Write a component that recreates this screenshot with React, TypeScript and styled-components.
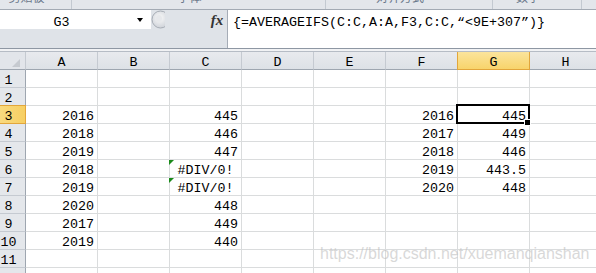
import React from "react";
import styled, { createGlobalStyle } from "styled-components";

const GlobalStyle = createGlobalStyle`
  html, body {
    margin: 0;
    padding: 0;
    background: #fff;
  }
  body {
    overflow: hidden;
  }
`;

const MONO = `"Liberation Mono", "DejaVu Sans Mono", monospace`;

const Frame = styled.div`
  position: relative;
  width: 596px;
  height: 273px;
  overflow: hidden;
  background: #fff;
  font-family: ${MONO};
  font-size: 13.33px;
  color: #000;
`;

// bottom edge of the ribbon, only the group captions peek out
const Ribbon = styled.div`
  display: flex;
  height: 9px;
  overflow: hidden;
  background: #e3e6eb;
  border-bottom: 1px solid #a3aab4;
`;

const RibbonGroup = styled.div<{ $w?: number }>`
  flex: ${p => (p.$w ? `0 0 ${p.$w}px` : "1")};
  box-sizing: border-box;
  height: 9px;
  overflow: hidden;
  padding-right: 18px;
  border-right: 1px solid #c3c9d1;
  text-align: center;
`;

const RibbonLabel = styled.span`
  display: block;
  margin-top: -9px;
  font-family: "Noto Sans CJK SC", sans-serif;
  font-size: 12px;
  line-height: 12px;
  color: #6a788a;
`;

const FormulaBar = styled.div`
  display: flex;
  height: 38px;
  background: #dfe3e8;
  border-bottom: 1px solid #8e97a3;
`;

const NameArea = styled.div`
  flex: 0 0 227px;
  display: flex;
  align-items: flex-start;
`;

const NameBox = styled.div`
  display: flex;
  align-items: center;
  width: 151px;
  height: 19px;
  background: #fff;
`;

const NameText = styled.div`
  width: 123px;
  height: 19px;
  overflow: hidden;
  text-align: center;
  line-height: 25px;
`;

const DropArrow = styled.span`
  margin-left: 14px;
  width: 0;
  height: 0;
  border-top: 4px solid #000;
  border-left: 3.5px solid transparent;
  border-right: 3.5px solid transparent;
`;

const FxButton = styled.div`
  margin-left: auto;
  margin-right: 2px;
  width: 16px;
  height: 19px;
  text-align: center;
  font-family: "Liberation Serif", serif;
  font-style: italic;
  font-weight: bold;
  font-size: 15px;
  line-height: 21px;
  color: #333;
`;

const FormulaInput = styled.div`
  flex: 1;
  background: #fff;
  border-left: 1px solid #a5acb6;
  padding-left: 5px;
  line-height: 25px;
  white-space: nowrap;
`;

const Gap = styled.div`
  height: 2px;
  background: #f1f2f4;
`;

const Sheet = styled.div`
  border-top: 1px solid #b6bcc5;
`;

const Row = styled.div`
  display: flex;
  width: max-content;
`;

const Corner = styled.div`
  position: relative;
  flex: 0 0 26px;
  box-sizing: border-box;
  height: 18px;
  background: #e2e5ea;
  border-right: 1px solid #c5cad1;
  border-bottom: 1px solid #9ea6b0;
`;

const CornerTriangle = styled.span`
  position: absolute;
  right: 5px;
  bottom: 2px;
  width: 0;
  height: 0;
  border-left: 8px solid transparent;
  border-bottom: 8px solid #c6cad0;
`;

const ColHead = styled.div<{ $active?: boolean }>`
  flex: 0 0 72px;
  box-sizing: border-box;
  height: 18px;
  overflow: hidden;
  text-align: center;
  line-height: 22px;
  background: ${p =>
    p.$active ? "linear-gradient(#fbe49c, #f8d46b)" : "linear-gradient(#e8eaee, #dde1e6)"};
  border-right: 1px solid ${p => (p.$active ? "#e2a63b" : "#c5cad1")};
  border-bottom: 1px solid ${p => (p.$active ? "#e2a63b" : "#9ea6b0")};
  box-shadow: ${p => (p.$active ? "-1px 0 0 #e2a63b" : "none")};
`;

const RowHead = styled.div<{ $active?: boolean }>`
  flex: 0 0 26px;
  box-sizing: border-box;
  height: 18px;
  overflow: hidden;
  padding-right: 8px;
  text-align: center;
  line-height: 21px;
  background: ${p => (p.$active ? "linear-gradient(90deg, #f9da7f, #f7cf62)" : "#e4e7eb")};
  border-right: 1px solid ${p => (p.$active ? "#e2a63b" : "#9ea6b0")};
  border-bottom: 1px solid ${p => (p.$active ? "#e2a63b" : "#c5cad1")};
  box-shadow: ${p => (p.$active ? "0 -1px 0 #e2a63b" : "none")};
`;

const Cell = styled.div<{ $align?: "left" | "right" | "center" }>`
  position: relative;
  flex: 0 0 72px;
  box-sizing: border-box;
  height: 18px;
  padding: 0 3px;
  text-align: ${p => p.$align ?? "right"};
  line-height: 21px;
  white-space: nowrap;
  border-right: 1px solid #dadcdd;
  border-bottom: 1px solid #dadcdd;
`;

const ErrorMark = styled.span`
  position: absolute;
  top: 0;
  left: -1px;
  width: 0;
  height: 0;
  border-top: 5px solid #1a8a1a;
  border-right: 5px solid transparent;
`;

const Selection = styled.span`
  position: absolute;
  z-index: 2;
  top: -2px;
  left: -2px;
  right: -1px;
  bottom: -1px;
  border: 2px solid #000;
  pointer-events: none;
`;

const FillHandle = styled.span`
  position: absolute;
  z-index: 3;
  right: -2px;
  bottom: -3px;
  width: 5px;
  height: 5px;
  background: #000;
  border: 1px solid #fff;
`;

const Watermark = styled.div`
  position: absolute;
  left: 320px;
  top: 245px;
  font-family: "Liberation Sans", Arial, sans-serif;
  font-size: 16px;
  color: rgba(190, 190, 190, 0.6);
  white-space: nowrap;
  pointer-events: none;
`;

const COLS = ["A", "B", "C", "D", "E", "F", "G", "H"];

const colA: Record<number, string> = {
  3: "2016", 4: "2018", 5: "2019", 6: "2018", 7: "2019", 8: "2020", 9: "2017", 10: "2019",
};
const colC: Record<number, string> = {
  3: "445", 4: "446", 5: "447", 6: "#DIV/0!", 7: "#DIV/0!", 8: "448", 9: "449", 10: "440",
};
const colF: Record<number, string> = { 3: "2016", 4: "2017", 5: "2018", 6: "2019", 7: "2020" };
const colG: Record<number, string> = { 3: "445", 4: "449", 5: "446", 6: "443.5", 7: "448" };

const values: Record<string, Record<number, string>> = { A: colA, C: colC, F: colF, G: colG };

function Splitter() {
  return (
    <svg width="14" height="19" viewBox="0 0 14 19">
      <defs>
        <radialGradient id="knob" cx="0.45" cy="0.4" r="0.6">
          <stop offset="0" stopColor="#fafafa" />
          <stop offset="1" stopColor="#cfd3d9" />
        </radialGradient>
      </defs>
      <circle cx="9.5" cy="9.5" r="8.5" fill="url(#knob)" stroke="#a7adb5" />
      <ellipse cx="8" cy="8.5" rx="3" ry="3.5" fill="#e6e8eb" />
    </svg>
  );
}

export default function App() {
  const rows = Array.from({ length: 12 }, (_, i) => i + 1);
  return (
    <>
      <GlobalStyle />
      <Frame>
        <Ribbon>
          <RibbonGroup $w={72}><RibbonLabel>剪贴板</RibbonLabel></RibbonGroup>
          <RibbonGroup $w={254}><RibbonLabel>字体</RibbonLabel></RibbonGroup>
          <RibbonGroup $w={167}><RibbonLabel>对齐方式</RibbonLabel></RibbonGroup>
          <RibbonGroup $w={89}><RibbonLabel>数字</RibbonLabel></RibbonGroup>
          <RibbonGroup />
        </Ribbon>

        <FormulaBar>
          <NameArea>
            <NameBox>
              <NameText>G3</NameText>
              <DropArrow />
            </NameBox>
            <Splitter />
            <FxButton>fx</FxButton>
          </NameArea>
          <FormulaInput>{"{=AVERAGEIFS(C:C,A:A,F3,C:C,“<9E+307”)}"}</FormulaInput>
        </FormulaBar>
        <Gap />

        <Sheet>
          <Row>
            <Corner>
              <CornerTriangle />
            </Corner>
            {COLS.map(c => (
              <ColHead key={c} $active={c === "G"}>{c}</ColHead>
            ))}
          </Row>
          {rows.map(r => (
            <Row key={r}>
              <RowHead $active={r === 3}>{r}</RowHead>
              {COLS.map(c => {
                const v = values[c]?.[r] ?? "";
                const isErr = v.startsWith("#");
                return (
                  <Cell key={c} $align={isErr ? "center" : "right"}>
                    {isErr && <ErrorMark />}
                    {v}
                    {c === "G" && r === 3 && (
                      <>
                        <Selection />
                        <FillHandle />
                      </>
                    )}
                  </Cell>
                );
              })}
            </Row>
          ))}
        </Sheet>

        <Watermark>https://blog.csdn.net/xuemanqianshan</Watermark>
      </Frame>
    </>
  );
}
